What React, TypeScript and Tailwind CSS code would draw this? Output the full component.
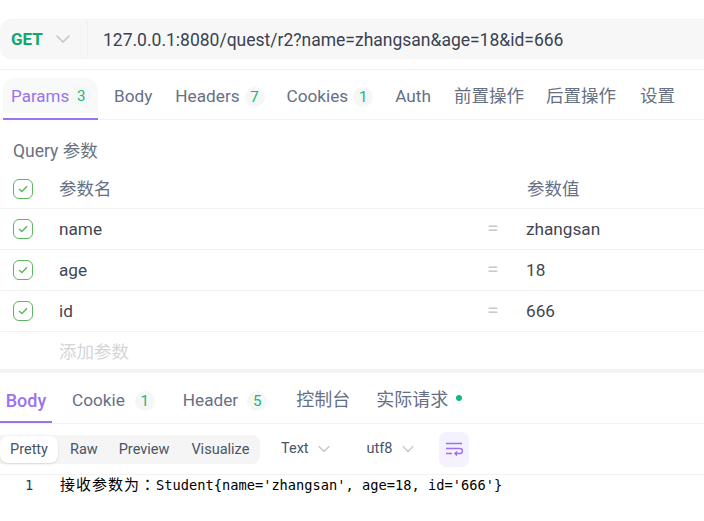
import { ChevronDown } from "lucide-react";

const font = { fontFamily: 'Roboto, "Noto Sans CJK SC", sans-serif' };

function Check() {
  return (
    <span className="flex h-5 w-5 items-center justify-center rounded-[6px] border border-[#5cb85f]">
      <svg width="10" height="8" viewBox="0 0 10 8" fill="none">
        <path d="M1 4l3 2.6L9 1.2" stroke="#5cb85f" strokeWidth="1.4" />
      </svg>
    </span>
  );
}

function Badge({ n }: { n: number }) {
  return (
    <span className="flex h-5 w-5 items-center justify-center rounded-full bg-[#f5f6f6] text-[15px] text-[#14b87a]">
      {n}
    </span>
  );
}

function ParamRow({ name, value }: { name: string; value: string }) {
  return (
    <div className="flex h-[41px] items-center border-b border-[#f2f2f2] pl-[13px] text-[17.2px] text-[#3f4654]">
      <Check />
      <span className="ml-[26px] w-[428px] pt-0.5">{name}</span>
      <span className="w-[39px] text-[21px] text-[#c6c9cf]">=</span>
      <span className="pt-0.5">{value}</span>
    </div>
  );
}

export default function App() {
  return (
    <div className="h-[521px] w-[704px] overflow-hidden bg-white" style={font}>
      <div className="h-[19px]" />
      <div className="flex h-10 items-center rounded-l-xl border-b border-t border-[#f3f3f3] bg-[#f7f7f7]">
        <div className="flex h-full w-[88px] items-center border-r border-[#f1f1f1] pl-[11px]">
          <span className="pt-0.5 text-[17px] font-bold text-[#12a86c]">GET</span>
          <ChevronDown className="ml-2 h-6 w-6 text-[#c4c6ca]" strokeWidth={1.5} />
        </div>
        <span className="ml-[15px] pt-0.5 text-[17.5px] text-[#3a4252]">127.0.0.1:8080/quest/r2?name=zhangsan&amp;age=18&amp;id=666</span>
      </div>
      <div className="mt-[10px] h-px bg-[#f1f1f1]" />

      <div className="mt-2 flex h-[42px] items-stretch border-b border-[#f2f2f2] text-[17.2px] text-[#667085]">
        <div className="ml-[3px] flex h-[42px] w-[95px] items-start border-b-2 border-[#9b72f0]">
          <div className="flex h-[35px] w-[95px] items-center gap-0.5 rounded-t-xl bg-[#f8f9f9] pl-2 pt-px">
            <span className="pt-0.5 text-[17px] text-[#9b72f0]">Params</span>
            <Badge n={3} />
          </div>
        </div>
        <span className="ml-4 flex h-[38px] items-center">Body</span>
        <span className="ml-[23px] flex h-[38px] items-center gap-[5px]">Headers <Badge n={7} /></span>
        <span className="ml-[22px] flex h-[38px] items-center gap-[5px]">Cookies <Badge n={1} /></span>
        <span className="ml-[22px] flex h-[38px] items-center">Auth</span>
        <span className="ml-[23px] flex h-[37px] items-center text-[17.5px]">前置操作</span>
        <span className="ml-[22px] flex h-[37px] items-center text-[17.5px]">后置操作</span>
        <span className="ml-6 flex h-[37px] items-center text-[17.5px]">设置</span>
      </div>

      <div className="flex h-[50px] items-center pl-[13px] pt-3 text-[17.5px] text-[#6b7280]">Query 参数</div>
      <div className="flex h-[39px] items-center border-b border-[#f2f2f2] pl-[13px] text-[17.5px] text-[#667085]">
        <Check />
        <span className="ml-[26px] w-[468px]">参数名</span>
        <span>参数值</span>
      </div>
      <ParamRow name="name" value="zhangsan" />
      <ParamRow name="age" value="18" />
      <ParamRow name="id" value="666" />
      <div className="flex h-[37px] items-center pl-[59px] pt-[3px] text-[17.5px] text-[#d3d5d8]">添加参数</div>
      <div className="h-1 bg-[#f3f3f6]" />

      <div className="flex h-[51px] items-stretch border-b border-[#f2f2f2] text-[17.2px] text-[#667085]">
        <div className="flex w-[52px] items-center justify-center border-b-2 border-[#9b72f0] pt-[7px] text-[18px] font-medium text-[#9b72f0]">Body</div>
        <span className="ml-5 flex items-center gap-2.5 pt-[6px]">Cookie <Badge n={1} /></span>
        <span className="ml-[28px] flex items-center gap-[9px] pt-[6px]">Header <Badge n={5} /></span>
        <span className="ml-[29px] flex items-center pt-[3px] text-[18px]">控制台</span>
        <span className="ml-[26px] flex items-center gap-2 pt-[3px] text-[18px]">
          实际请求
          <span className="mb-1 h-[6px] w-[6px] rounded-full bg-[#14b87a]" />
        </span>
      </div>

      <div className="flex h-[51px] items-center border-b border-[#f2f2f2] text-[14.5px] text-[#475467]">
        <div className="flex h-[29px] w-[260px] items-center rounded-r-lg bg-[#f5f5f6] pt-px">
          <span className="flex h-[27px] w-[58px] items-center justify-center rounded-lg bg-white shadow-sm">Pretty</span>
          <span className="ml-3">Raw</span>
          <span className="ml-[21px]">Preview</span>
          <span className="ml-[22px]">Visualize</span>
        </div>
        <span className="ml-[21px]">Text</span>
        <ChevronDown className="ml-[5px] h-5 w-5 text-[#c4c6ca]" strokeWidth={1.5} />
        <span className="ml-[33px]">utf8</span>
        <ChevronDown className="ml-[5px] h-5 w-5 text-[#c4c6ca]" strokeWidth={1.5} />
        <span className="ml-[21px] flex h-[35px] w-[30px] items-center justify-center rounded-lg bg-[#f5f1fe]">
          <svg width="18" height="14" viewBox="0 0 18 14" fill="none" stroke="#9b72f0" strokeWidth="1.5">
            <path d="M1 1.5h16M1 6.5h14a2.5 2.5 0 0 1 0 5h-4M1 11.5h6" />
            <path d="M12 9.5l-2 2 2 2" fill="#9b72f0" />
          </svg>
        </span>
      </div>

      <div
        className="flex h-5 items-center whitespace-nowrap text-[13.7px] text-black"
        style={{ fontFamily: '"DejaVu Sans Mono", "Noto Sans CJK SC", monospace' }}
      >
        <span className="ml-[25px] w-[35px] text-[#1f3a68]">1</span>
        <span className="w-[96px] text-[15px] tracking-[1px]">
          接收参数为<span className="font-['Noto_Sans_CJK_TC']">：</span>
        </span>
        <span>Student{"{"}name='zhangsan', age=18, id='666'{"}"}</span>
      </div>
    </div>
  );
}
